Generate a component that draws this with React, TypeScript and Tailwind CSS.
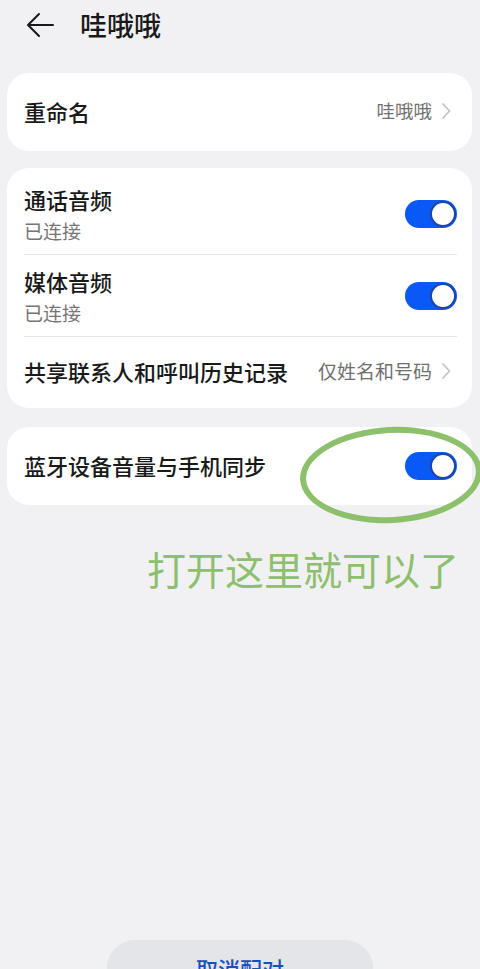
import React from "react";

const font = { fontFamily: '"Noto Sans CJK SC", "Noto Sans", sans-serif' };

function Toggle() {
  return (
    <div className="w-[52px] h-[28px] rounded-full bg-[#0a59f7] flex items-center justify-end pr-[1px] shrink-0">
      <div className="w-[26px] h-[26px] rounded-full bg-white border-[2.5px] border-[#1c45a3]" />
    </div>
  );
}

function Chevron() {
  return (
    <svg width="12" height="20" viewBox="0 0 12 20" className="ml-[8px] shrink-0">
      <path d="M3 3 L9.5 10 L3 17" fill="none" stroke="#c4c4c6" strokeWidth="1.8" strokeLinecap="round" strokeLinejoin="round" />
    </svg>
  );
}

export default function App() {
  return (
    <div
      className="h-[969px] w-[480px] overflow-hidden bg-[#f1f1f3] flex flex-col text-[#191919]"
      style={font}
    >
      {/* Header */}
      <div className="h-[50px] flex items-center shrink-0">
        <svg width="28" height="26" viewBox="0 0 28 26" className="ml-[26px]">
          <path d="M27 13 H2.5 M13 2 L2 13 L13 24" fill="none" stroke="#1a1a1a" strokeWidth="2" strokeLinecap="round" strokeLinejoin="round" />
        </svg>
        <div className="ml-[26px] text-[27px] leading-[34px] font-medium">哇哦哦</div>
      </div>

      {/* Card 1 */}
      <div className="mt-[23px] ml-[7px] mr-[8px] bg-white rounded-[22px] h-[78px] flex items-center pl-[17px] pr-[20px] pb-[2px] shrink-0">
        <div className="text-[22px] leading-[30px] font-medium flex-1">重命名</div>
        <div className="text-[18.5px] text-[#6f6f6f]">哇哦哦</div>
        <Chevron />
      </div>

      {/* Card 2 */}
      <div className="mt-[17px] ml-[7px] mr-[8px] bg-white rounded-[22px] pt-[5px] shrink-0">
        <div className="ml-[17px] mr-[15px] flex items-center pt-[11px] pb-[10px] border-b border-[#e6e6e8]">
          <div className="flex-1">
            <div className="text-[22px] leading-[30px] font-medium">通话音频</div>
            <div className="text-[19px] leading-[26px] mt-[4px] text-[#757575]">已连接</div>
          </div>
          <Toggle />
        </div>
        <div className="ml-[17px] mr-[15px] flex items-center pt-[11px] pb-[10px] border-b border-[#e6e6e8]">
          <div className="flex-1">
            <div className="text-[22px] leading-[30px] font-medium">媒体音频</div>
            <div className="text-[19px] leading-[26px] mt-[4px] text-[#757575]">已连接</div>
          </div>
          <Toggle />
        </div>
        <div className="ml-[17px] mr-[20px] h-[71px] pb-[3px] flex items-center">
          <div className="text-[22px] leading-[30px] font-medium flex-1">共享联系人和呼叫历史记录</div>
          <div className="text-[19px] text-[#6f6f6f]">仅姓名和号码</div>
          <Chevron />
        </div>
      </div>

      {/* Card 3 */}
      <div className="relative mt-[19px] ml-[7px] mr-[8px] bg-white rounded-[22px] h-[78px] flex items-center pl-[17px] pr-[15px] shrink-0">
        <div className="text-[22px] leading-[30px] font-medium flex-1 pb-[3px]">蓝牙设备音量与手机同步</div>
        <Toggle />
        <div className="absolute left-[293px] top-[0px] w-[182px] h-[96px] rounded-[50%] border-[6px] border-[#8cc06a] -rotate-[3deg]" />
      </div>

      {/* Annotation */}
      <div className="mt-[41px] pl-[147px] text-[39px] leading-[44px] text-[#8dbf6e] shrink-0 whitespace-nowrap">
        打开这里就可以了
      </div>

      <div className="flex-1" />

      {/* Bottom button */}
      <div className="self-center w-[266px] h-[56px] rounded-full bg-[#e4e5e9] flex items-center justify-center mb-[-27px] shrink-0">
        <span className="text-[22px] font-medium text-[#1b4fb5]">取消配对</span>
      </div>
    </div>
  );
}
